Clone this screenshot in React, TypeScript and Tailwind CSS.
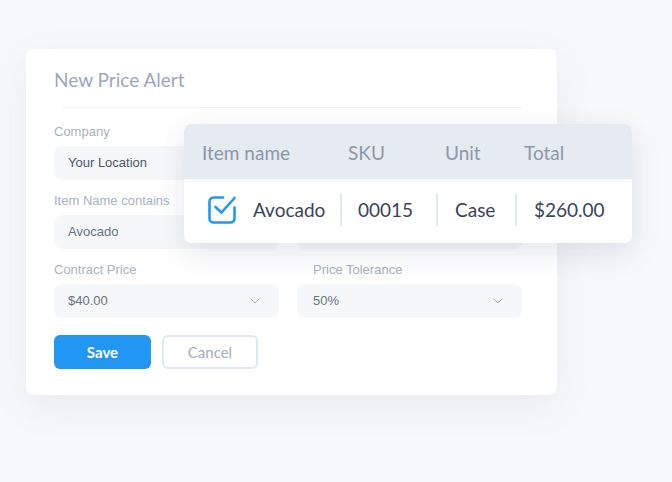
import { ChevronDown } from "lucide-react";

const fields = [
  { label: "Company", value: "Your Location", strong: true },
  { label: "", value: "" },
  { label: "Item Name contains", value: "Avocado" },
  { label: "", value: "" },
  { label: "Contract Price", value: "$40.00", select: true },
  { label: "Price Tolerance", value: "50%", select: true },
];

function CheckIcon() {
  return (
    <svg width="28" height="28" viewBox="0 0 28 28" fill="none" stroke="#2196f3" strokeWidth="2.6" strokeLinecap="round" strokeLinejoin="round">
      <path d="M15 1.5H5.5a4 4 0 0 0-4 4v17a4 4 0 0 0 4 4h17a4 4 0 0 0 4-4V11.5" />
      <path d="M7.5 11l6 5.5L26.5 2" />
    </svg>
  );
}

export default function App() {
  return (
    <div className="min-h-screen w-full bg-[#f7f8fa] pt-[49px] pl-[26px] font-['Liberation_Sans',Arial,sans-serif]">
      <div className="relative w-[531px] rounded-lg bg-white pl-[28px] pr-[35px] pt-[19px] pb-[26px] shadow-[0_12px_40px_rgba(40,52,90,0.07)]">
        {/* Header */}
        <h1 className="font-['Lato',sans-serif] text-[19px] leading-6 text-[#9ca7ba]">New Price Alert</h1>
        <div className="ml-2 mt-[15px] h-px bg-[#eef1f5]" />

        {/* Form */}
        <div className="mt-4 grid grid-cols-2 gap-x-[18px] gap-y-[13px]">
          {fields.map((f, i) => (
            <div key={i}>
              <p className={`h-4 text-[13px] leading-4 text-[#a9b1be] ${i % 2 === 1 ? "pl-[16px]" : ""}`}>{f.label}</p>
              <div className={`mt-[6px] flex h-[34px] items-center justify-between rounded-lg bg-[#f6f7f9] pr-[16px] text-[13px] ${i % 2 === 1 ? "pl-[16px]" : "pl-[14px]"}`}>
                <span className={f.strong ? "text-[#4d5668]" : "text-[#687284]"}>{f.value}</span>
                {f.select && <ChevronDown className="h-4 w-4 text-[#9ea7b5]" strokeWidth={1.4} />}
              </div>
            </div>
          ))}
        </div>

        <div className="mt-[17px] flex gap-[11px] font-['Lato',sans-serif] text-[15px]">
          <button className="h-[34px] w-[97px] rounded-md bg-[#2196f3] font-bold text-white">Save</button>
          <button className="h-[34px] w-[96px] rounded-md border-2 border-[#e2e8f0] text-[#a3adbb]">Cancel</button>
        </div>

        {/* Table overlay */}
        <div className="absolute left-[158px] top-[75px] w-[448px] overflow-hidden rounded-lg bg-white font-['Lato',sans-serif] text-[19px] shadow-[0_10px_30px_rgba(40,52,90,0.12)]">
          <div className="grid h-[55px] grid-cols-[156px_96px_79px_1fr] items-center bg-[#e6eaf1] pt-[3px] text-[#8c97a8]">
            <span className="pl-[18px]">Item name</span>
            <span className="pl-2">SKU</span>
            <span className="pl-[9px]">Unit</span>
            <span className="pl-[9px]">Total</span>
          </div>
          <div className="grid h-[64px] grid-cols-[156px_96px_79px_1fr] items-center pb-[2px] text-[#3b4456]">
            <div className="flex items-center gap-[17px] pl-6">
              <CheckIcon />
              <span>Avocado</span>
            </div>
            <div className="flex h-8 items-center border-l-2 border-[#e1e7ef] pl-4">00015</div>
            <div className="flex h-8 items-center border-l-2 border-[#e1e7ef] pl-[17px]">Case</div>
            <div className="flex h-8 items-center border-l-2 border-[#e1e7ef] pl-[17px]">$260.00</div>
          </div>
        </div>
      </div>
    </div>
  );
}
